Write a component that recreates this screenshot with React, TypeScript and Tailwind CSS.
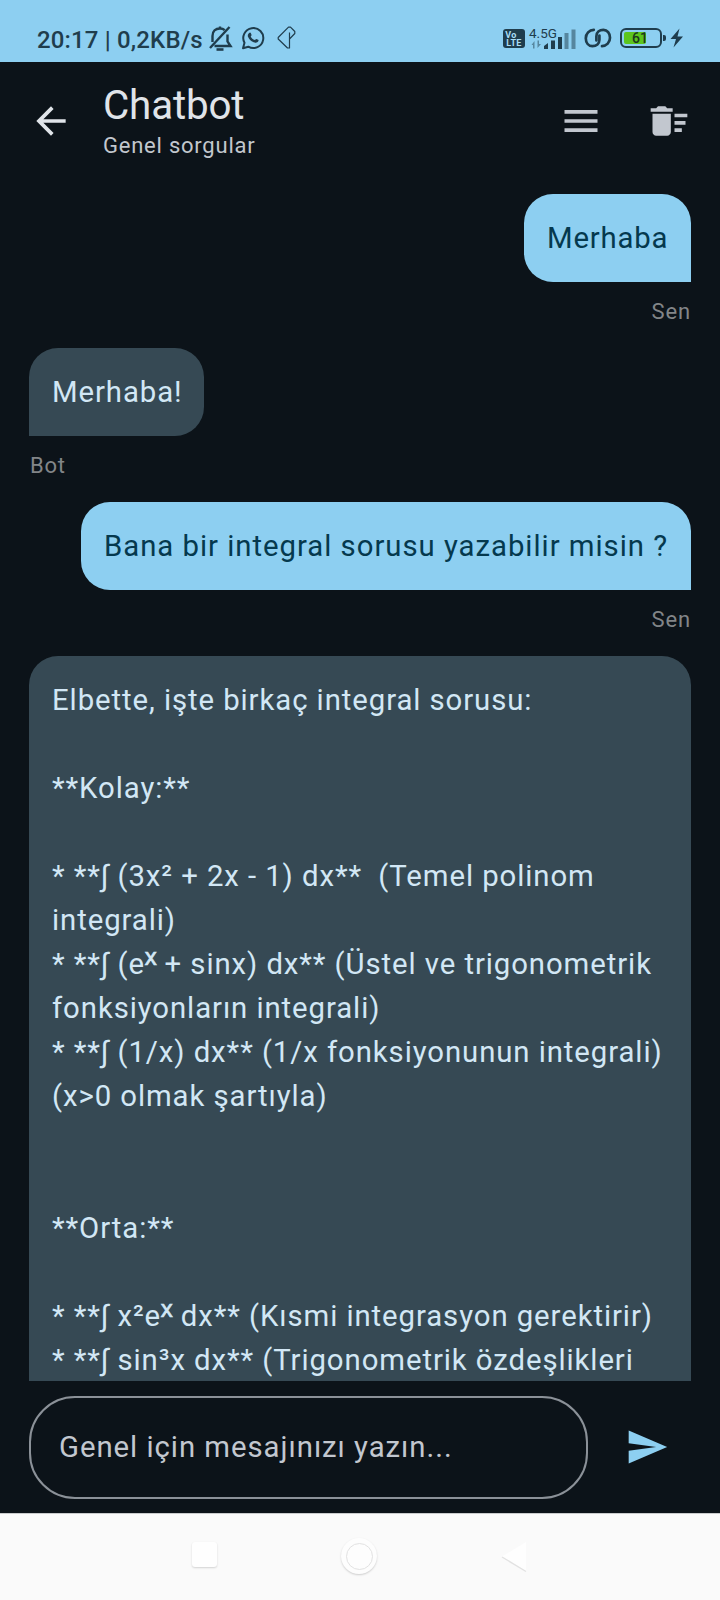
import type { ReactNode } from "react";

const SuperX = () => <span className="text-[35px] leading-[0] tracking-normal [-webkit-text-stroke:0.7px_#d2e7f5]">ˣ</span>;

const answer: ReactNode[] = [
  "Elbette, işte birkaç integral sorusu:",
  "",
  "**Kolay:**",
  "",
  "* **∫ (3x² + 2x - 1) dx**  (Temel polinom",
  "integrali)",
  <>
    * **∫ (e
    <SuperX />
    {" + sinx) dx** (Üstel ve trigonometrik"}
  </>,
  "fonksiyonların integrali)",
  "* **∫ (1/x) dx** (1/x fonksiyonunun integrali)",
  "(x>0 olmak şartıyla)",
  "",
  "",
  "**Orta:**",
  "",
  <>
    * **∫ x²e
    <SuperX />
    {" dx** (Kısmi integrasyon gerektirir)"}
  </>,
  "* **∫ sin³x dx** (Trigonometrik özdeşlikleri",
];

function StatusBar() {
  return (
    <div className="flex h-[62px] shrink-0 items-start bg-[#8dcff1] pl-[37px] pt-[24px] text-[#1f3d4d]">
      <span className="w-[171px] whitespace-pre text-[24px] font-medium leading-[32px] tracking-[0.15px]">20:17 | 0,2KB/s</span>
      <svg className="mt-[1px] h-[28px] w-[25px]" viewBox="0 0 25 28" fill="none" stroke="currentColor" strokeWidth="2.4">
        <path d="M19.5 9.5V16.500l3 4.500H6.500M4.500 17V11c0-5 3-7.500 7.500-7.500 2 0 3.500.6 4.700 1.700M12 3.500V1.500" />
        <path d="M21.500 2 2 23" />
        <path d="M8.500 24.500h7" strokeWidth="2.600" />
      </svg>
      <svg className="ml-[8px] mt-[2px] h-[24px] w-[24px]" viewBox="0 0 24 24" fill="none">
        <path d="M2 22.200 3.500 16.800A10 10 0 1 1 7.300 20.700Z" stroke="currentColor" strokeWidth="2" strokeLinejoin="round" />
        <path
          d="M8.600 6.700c.5-.3 1-.1 1.200.4l.8 1.800c.1.5-.7 1.200-.9 1.600.9 1.700 2.200 2.800 4 3.600.5-.2 1.100-1.300 1.600-1.200l1.900.9c.5.3.4.8.2 1.300-.8 1.800-2.900 2-4.800 1.200-2.700-1.100-4.800-3.200-5.700-5.800-.4-1.500.3-3.200 1.700-3.800Z"
          fill="currentColor"
        />
      </svg>
      <svg className="ml-[12px] mt-[2px] h-[24px] w-[19px]" viewBox="0 0 19 24" fill="none" stroke="currentColor" strokeWidth="1.200" strokeLinejoin="round">
        <path d="M12.500 13 17.800 7.500V5.500L13.500 1.200h-2L1.200 11.500v1.500L10.500 22h2V6.500" />
      </svg>
      <div className="ml-[207px] mt-[5px] flex h-[19px] w-[22px] flex-col items-center justify-center rounded-[3px] bg-[#1f3d4d] text-[9px] font-bold leading-[8px] tracking-[0.3px] text-[#a9dcf5]">
        <span className="-ml-[6px]">Vo</span>
        <span>LTE</span>
      </div>
      <div className="relative ml-[4px] mt-[3px] h-[24px] w-[48px]">
        <span className="absolute left-0 top-[-2px] whitespace-nowrap text-[13.5px] leading-[16px]">4.5G</span>
        <svg className="h-[24px] w-[48px]" viewBox="0 0 48 24" fill="currentColor">
          <path d="M5.500 14v7.500H4V18H2.500ZM8.500 21V13.500H10V17h2Z" opacity=".5" />
          <path d="M15 22v-3l4-3v6zM22 13.500h4V22h-4zM29 10h4v12h-4z" />
          <path d="M35.500 6h4v16h-4zM42.500 2.500h4V22h-4z" opacity=".5" />
        </svg>
      </div>
      <svg className="ml-[7px] mt-[4px] h-[20px] w-[28px]" viewBox="0 0 28 20" fill="none" stroke="currentColor" strokeWidth="2.700" strokeLinecap="round">
        <path d="M9.800 1.900C5.200 2 1.800 5.500 1.800 10.200c0 4.600 2.700 7.900 6.600 7.900 4 0 7-2.500 7-6.300V7.500" />
        <path d="M18 18.100c4.600-.1 8-3.600 8-8.300 0-4.600-2.700-7.900-6.600-7.900-4 0-7 2.500-7 6.300v4.300" />
      </svg>
      <div className="ml-[8px] mt-[4px] flex h-[20px] w-[42px] rounded-[6px] border-2 border-[#1f3d4d] p-[2px]">
        <div className="relative h-full w-[22px] rounded-[2px] bg-[#5cc51c]">
          <span className="absolute left-[8px] top-[-1px] text-[14px] font-medium leading-[14px] text-[#1b381c]">61</span>
        </div>
      </div>
      <div className="ml-[1px] mt-[11px] h-[6px] w-[3px] rounded-r-[2px] bg-[#1f3d4d]" />
      <svg className="ml-[4px] mt-[4px] h-[20px] w-[14px]" viewBox="0 0 14 20" fill="currentColor">
        <path d="M9.500.500.500 11H6L3.500 19.500 13 8.500H7.500Z" />
      </svg>
    </div>
  );
}

function Icon({ d, className }: { d: string; className: string }) {
  return (
    <svg className={className} viewBox="0 0 24 24" fill="currentColor">
      <path d={d} />
    </svg>
  );
}

function Sent({ className, children }: { className: string; children: ReactNode }) {
  return (
    <div className="mb-[22px] flex shrink-0 flex-col items-end">
      <div
        className={`whitespace-pre rounded-[29px] rounded-br-none bg-[#8dcff1] py-[22px] pl-[23px] text-[29.33px] leading-[44px] text-[#05394e] ${className}`}
      >
        {children}
      </div>
      <span className="mt-[15px] text-[22px] leading-[29px] tracking-[0.9px] text-[#828588]">Sen</span>
    </div>
  );
}

function Received({ className, label, children }: { className: string; label?: string; children: ReactNode }) {
  return (
    <div className="mb-[22px] flex shrink-0 flex-col items-start">
      <div
        className={`whitespace-pre rounded-[29px] rounded-bl-none bg-[#364954] py-[22px] pl-[23px] text-[29.33px] leading-[44px] tracking-[0.92px] text-[#d2e7f5] ${className}`}
      >
        {children}
      </div>
      {label && <span className="ml-[1px] mt-[15px] text-[22px] leading-[29px] tracking-[0.73px] text-[#828588]">{label}</span>}
    </div>
  );
}

export default function App() {
  return (
    <div className="flex h-[1600px] w-[720px] flex-col overflow-hidden bg-[#0c1319] font-['Roboto',sans-serif]">
      <StatusBar />
      <header className="flex h-[117px] shrink-0 items-center pl-[29px] pr-[29px]">
        <Icon className="h-[44px] w-[44px] text-[#e0e4e9]" d="M20 11H7.830l5.590-5.590L12 4l-8 8 8 8 1.410-1.410L7.830 13H20v-2z" />
        <div className="ml-[30px] flex flex-1 flex-col pb-[1px]">
          <h1 className="text-[40.33px] leading-[51px] tracking-[-0.15px] text-[#e0e4e9]">Chatbot</h1>
          <p className="text-[22px] leading-[29px] tracking-[0.77px] text-[#c2c7cd]">Genel sorgular</p>
        </div>
        <Icon className="h-[44px] w-[44px] text-[#c2c7cf]" d="M3 18h18v-2H3v2zm0-5h18v-2H3v2zm0-7v2h18V6H3z" />
        <Icon
          className="ml-[44px] h-[44px] w-[44px] text-[#c2c7cf]"
          d="M15 16h4v2h-4zm0-8h7v2h-7zm0 4h6v2h-6zM3 18c0 1.100.9 2 2 2h6c1.100 0 2-.9 2-2V8H3v10zM14 5h-3l-1-1H6L5 5H2v2h12z"
        />
      </header>
      <main className="flex h-[1202px] shrink-0 flex-col overflow-hidden px-[29px] pt-[15px]">
        <Sent className="w-[167px] tracking-[0.8px]">Merhaba</Sent>
        <Received className="w-[175px]" label="Bot">Merhaba!</Received>
        <Sent className="w-[610px] tracking-[0.97px]">Bana bir integral sorusu yazabilir misin ?</Sent>
        <Received className="h-[800px] w-[662px]">
          {answer.map((line, i) => (
            <div key={i} className="h-[44px]">
              {line}
            </div>
          ))}
        </Received>
      </main>
      <footer className="flex h-[132px] shrink-0 items-start pl-[29px] pt-[15px]">
        <div className="flex h-[103px] w-[559px] items-center rounded-[46px] border-2 border-[#8b9198] pl-[28px] text-[29.33px] tracking-[0.96px] text-[#c2c7cf]">
          Genel için mesajınızı yazın...
        </div>
        <Icon className="ml-[37px] mt-[29px] h-[44px] w-[44px] text-[#8dcff1]" d="M2.010 21 23 12 2.010 3 2 10l15 2-15 2z" />
      </footer>
      <nav className="flex h-[87px] shrink-0 items-start border-t border-[#c9cbcc] bg-[#fafafa] pl-[192px] pt-[27px]">
        <div className="mt-[1px] h-[25px] w-[25px] rounded-[3px] bg-[#fefefe] shadow-[0_1px_2px_rgba(0,0,0,0.16)]" />
        <div className="ml-[124px] mt-[-3px] flex h-[36px] w-[36px] items-center justify-center rounded-full bg-[#fdfdfd] shadow-[0_1px_2px_rgba(0,0,0,0.18)]">
          <div className="h-[27px] w-[27px] rounded-full border border-[#e2e2e2] bg-[#fdfdfd]" />
        </div>
        <svg className="ml-[124px] h-[32px] w-[27px]" viewBox="0 0 27 32">
          <path d="M25 1v29L1 15.500Z" fill="#fefefe" />
          <path d="M1 16 25 30.500" stroke="#e2e2e2" strokeWidth="1.300" />
        </svg>
      </nav>
    </div>
  );
}
